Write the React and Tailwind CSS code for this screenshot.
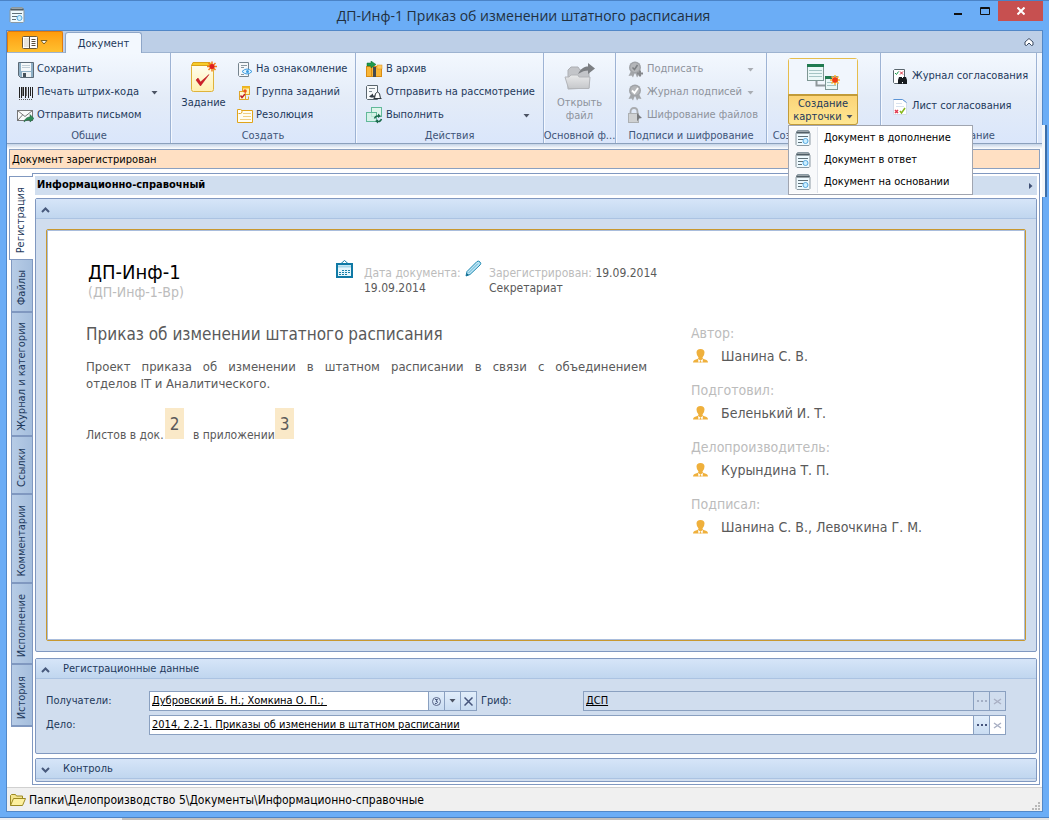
import React from "react";

/* ---------- icons ---------- */

const CardIcon = () => (
  <svg width="16" height="16" viewBox="0 0 16 16" className="shrink-0">
    <path d="M2.5 0.5h11l1.5 3v11l-1 1H2l-1-1v-11z" fill="#e8ecee" stroke="#8b9aa3" />
    <path d="M1.5 2.5h13" stroke="#4f5e66" strokeWidth="2" />
    <rect x="2" y="4" width="12" height="11" fill="#eefaff" />
    <path d="M3 6.500h10M3 9.500h5M3 12.500h4" stroke="#5f7078" />
    <circle cx="10.500" cy="11" r="2.500" fill="#cdefff" stroke="#55a8e0" />
  </svg>
);

const SaveIcon = () => (
  <svg width="16" height="16" viewBox="0 0 16 16">
    <path d="M0.500 0.500h15v15h-13l-2-2z" fill="#8fb0c6" stroke="#5c6a76" />
    <rect x="3" y="1" width="10" height="8" fill="#f5f8fa" />
    <path d="M4 3.500h8M4 5.500h8" stroke="#c0cdd6" />
    <rect x="4" y="10" width="9" height="5" fill="#eef2f4" />
    <rect x="5" y="11" width="3" height="4" fill="#46525c" />
  </svg>
);

const BarcodeIcon = () => (
  <svg width="16" height="16" viewBox="0 0 16 16" shapeRendering="crispEdges">
    <path d="M1.500 2v11M3.500 2v11M7.500 2v11M10.500 2v11M14.500 2v11" stroke="#222" />
    <path d="M5.500 2v9M12.500 2v9" stroke="#222" />
    <path d="M8.500 2v9M4.500 2v9" stroke="#777" />
    <path d="M1 14.500h14" stroke="#555" strokeDasharray="1 1" />
  </svg>
);

const MailIcon = () => (
  <svg width="17" height="16" viewBox="0 0 17 16">
    <rect x="0.500" y="2.500" width="15" height="10" fill="#fafafa" stroke="#777" />
    <path d="M0.500 2.500l7.500 6 7.500-6M0.500 12.500l5-5.500" fill="none" stroke="#777" />
    <path d="M7 14c1-4 4-5 6-5V6.500l4 4-4 3.500v-2c-2 0-4 0-6 2z" fill="#2f8a57" stroke="#1d5f3a" strokeWidth="0.500" />
  </svg>
);

const TaskIcon = () => (
  <svg width="28" height="32" viewBox="0 0 28 32">
    <defs>
      <linearGradient id="task" x1="0" y1="0" x2="0" y2="1">
        <stop offset="0" stopColor="#fffef0" />
        <stop offset="1" stopColor="#fff0b0" />
      </linearGradient>
    </defs>
    <rect x="1.500" y="3.500" width="22" height="27" rx="2" fill="url(#task)" stroke="#dfb33a" />
    <path d="M3 1.500h17l3 3H1.500z" fill="#f7cc28" stroke="#d9a21a" />
    <path d="M6 19l4.500 6L19 13.500l-8.500 7.500-2.500-4z" fill="#d0202a" stroke="#b01018" strokeWidth="0.500" />
    <path d="M22 0.500v10M17 5.500h10M18.500 2l7 7M25.500 2l-7 7" stroke="#f47a1a" strokeWidth="1.500" />
    <circle cx="22" cy="5.500" r="2.500" fill="#e01f1f" />
  </svg>
);

const ReviewIcon = () => (
  <svg width="16" height="16" viewBox="0 0 16 16">
    <path d="M2.500 0.500h9v14h-9l-1-1v-12z" fill="#f6f8fa" stroke="#76848e" />
    <path d="M4 3.500h6M4 5.500h3M4 12.500h3" stroke="#8b98a1" />
    <path d="M5 9.500q5-5 10 0q-5 5-10 0z" fill="#e2f4ff" stroke="#3d9be0" />
    <circle cx="10.500" cy="9.500" r="1.500" fill="#3d9be0" />
  </svg>
);

const TaskGroupIcon = () => (
  <svg width="16" height="16" viewBox="0 0 16 16">
    <rect x="5.500" y="1.500" width="7" height="8" fill="#fff3b4" stroke="#dfa52a" />
    <path d="M5 2.500h8" stroke="#f2bb20" strokeWidth="2" />
    <rect x="2.500" y="6.500" width="6" height="8" fill="#fff7cf" stroke="#dfa52a" />
    <path d="M3.500 10.500l1.500 2 3-3.500" fill="none" stroke="#c01f2a" strokeWidth="1.500" />
    <circle cx="8" cy="6" r="1.800" fill="#f0561a" />
    <path d="M9 14.500h2.500v-3" fill="none" stroke="#dfa52a" />
  </svg>
);

const ResolutionIcon = () => (
  <svg width="17" height="16" viewBox="0 0 17 16">
    <path d="M5.500 2.500h11v12h-15v-8" fill="#fffdf2" stroke="#e0a41c" />
    <path d="M7 5.500h8M7 8.500h8M4 11.500h11" stroke="#f0cf84" />
    <path d="M1.500 8.500v-7h3q1.500 0 1.500 2t-1.500 2h-2" fill="#fff" stroke="#e0a41c" />
  </svg>
);

const ArchiveIcon = () => (
  <svg width="17" height="17" viewBox="0 0 17 17">
    <rect x="0.500" y="5.500" width="15" height="10" fill="#f9b637" stroke="#d98c14" />
    <path d="M5.500 5.500v10" stroke="#d98c14" />
    <rect x="7" y="6" width="3" height="10" fill="#444a50" />
    <rect x="11" y="4" width="5" height="4" fill="#ffc95c" stroke="#d98c14" strokeWidth="0.500" />
    <path d="M1 2h4V0l5 3.500L5 7V5H1z" fill="#1e9a4c" stroke="#0e6a30" strokeWidth="0.500" />
  </svg>
);

const SendIcon = () => (
  <svg width="17" height="16" viewBox="0 0 17 16">
    <path d="M1.500 0.500h10v14h-10l-1-1v-12z" fill="#f8fafb" stroke="#59656d" />
    <path d="M3 3.500h6M3 6.500h3" stroke="#7d8a92" />
    <path d="M3 11.500l4-3v2h3v2h-5z" fill="#353d44" />
    <path d="M8.500 13.500l1-5q2-3 4 0l1 5z" fill="#fff" stroke="#30383e" />
    <path d="M7.500 13.500h8" stroke="#30383e" />
  </svg>
);

const RunIcon = () => (
  <svg width="17" height="17" viewBox="0 0 17 17">
    <rect x="5.500" y="0.500" width="10" height="9" fill="#dff5ec" stroke="#62b999" />
    <rect x="0.500" y="5.500" width="10" height="9" fill="#d2f2e5" fillOpacity="0.800" stroke="#62b999" />
    <path d="M8.500 11.500q1-3 4-2.500M15.500 12q-1 3-4 2.500" fill="none" stroke="#1b6b4c" strokeWidth="1.500" />
    <path d="M12 6.500l3 2.500-3 2zM12 16.500l-3-2.500 3-1.500z" fill="#1b6b4c" />
  </svg>
);

const OpenFileIcon = () => (
  <svg width="34" height="30" viewBox="0 0 34 30">
    <defs>
      <linearGradient id="folder" x1="0" y1="0" x2="0" y2="1">
        <stop offset="0" stopColor="#e8e9ea" />
        <stop offset="1" stopColor="#c6c8cb" />
      </linearGradient>
    </defs>
    <path d="M5 27V8l3-3h7l2 3h9v18z" fill="#c3c5c9" stroke="#adafb3" />
    <path d="M5.500 26.500L2 15h4l2-2h7l1 2h11l-1 11.500z" fill="url(#folder)" stroke="#b3b5b9" />
    <path d="M15 12c3-6 7-7.500 10-7.500V1l7 5.500-7 5.500V8.500c-3 0-6 1-10 3.500z" fill="#7c7f83" />
  </svg>
);

const SealIcon = ({ mark }) => (
  <svg width="17" height="17" viewBox="0 0 17 17">
    <path d="M4 10L1.500 15l3-0.500L6 16.500l2-5 2 5 1.500-2 3 0.500-2.500-5z" fill="#a3a6aa" />
    <circle cx="8" cy="6.500" r="6" fill="#a0a3a7" />
    <circle cx="8" cy="6.500" r="4.500" fill="#b4b6b9" />
    {mark === "check" ? (
      <path d="M5 6.500l2.500 2.500 3.500-5" fill="none" stroke="#fff" strokeWidth="1.800" />
    ) : (
      <g>
        <path d="M5.500 6.500l2 2 3-4.500" fill="none" stroke="#7c7f83" strokeWidth="1.500" />
        <path d="M13 9.500v6M10 12.500h6" stroke="#85888c" strokeWidth="2" />
      </g>
    )}
  </svg>
);

const LockIcon = () => (
  <svg width="17" height="17" viewBox="0 0 17 17">
    <path d="M3.500 7V5q0-4 3.500-4t3.500 4v2" fill="none" stroke="#a9acb0" strokeWidth="1.800" />
    <rect x="1.500" y="6.500" width="10" height="9" fill="#cfd1d3" stroke="#adb0b3" />
    <path d="M10 6l5 5-3 0.500-2 3z" fill="#77797d" />
  </svg>
);

const CreateCardIcon = () => (
  <svg width="34" height="28" viewBox="0 0 34 28">
    <path d="M10.500 17v5.500h9" fill="none" stroke="#8f979b" strokeWidth="2" />
    <rect x="1.500" y="1.500" width="16" height="16" fill="#eaf7f7" stroke="#7d9693" />
    <rect x="1" y="1" width="17" height="3" fill="#1f7a50" />
    <path d="M3 7.500h13M3 10.500h13M3 13.500h13" stroke="#a4c4c4" />
    <rect x="19.500" y="13.500" width="12" height="13" fill="#eaf7f7" stroke="#7d9693" />
    <rect x="19" y="13" width="7" height="3" fill="#1f7a50" />
    <path d="M21 19.500h9M21 22.500h9" stroke="#a4c4c4" />
    <path d="M29 12v10M24 17h10M25.500 13.500l7 7M32.500 13.500l-7 7" stroke="#ffb22a" strokeWidth="1.500" />
    <circle cx="29" cy="17" r="2.800" fill="#f03a18" />
  </svg>
);

const JournalIcon = () => (
  <svg width="15" height="16" viewBox="0 0 15 16">
    <path d="M1.500 0.500h10v14h-10l-1-1v-12z" fill="#fff" stroke="#59656d" />
    <path d="M2 4l1.500 1.500 2-3" fill="none" stroke="#1e9a4c" />
    <path d="M7 2.500l3 3M10 2.500l-3 3" stroke="#d8263a" />
    <path d="M6 8h3v1h1V8h3l1 3v4H10v-2H9v2H5v-4z" fill="#181c20" />
  </svg>
);

const SheetIcon = () => (
  <svg width="15" height="16" viewBox="0 0 15 16">
    <path d="M0.500 0.500h9l4 3v12h-13z" fill="#fff" stroke="#d3dcea" />
    <path d="M0.500 0.500h9l4 3" fill="none" stroke="#5b94d6" />
    <path d="M3 4.500h6M3 7.500h8" stroke="#d8e2ee" />
    <path d="M2 11l3 3M5 11l-3 3" stroke="#e03a50" strokeWidth="1.500" />
    <path d="M7 12l1.500 2L12 9" fill="none" stroke="#86b81c" strokeWidth="1.500" />
  </svg>
);

const CalendarIcon = () => (
  <svg width="17" height="18" viewBox="0 0 17 18" className="shrink-0">
    <path d="M4.500 4l4-3.500 4 3.500" fill="none" stroke="#1781ab" />
    <rect x="1" y="4" width="15" height="13" fill="#e6f6fc" stroke="#0f79a5" strokeWidth="2" />
    <path d="M2 6.500h13" stroke="#a8d8ea" strokeWidth="2" />
    <path d="M6 10.500h8M3 12.500h11M3 14.500h8" stroke="#1781ab" strokeDasharray="2 1" />
  </svg>
);

const PenIcon = () => (
  <svg width="17" height="17" viewBox="0 0 17 17">
    <path d="M1 16l1-4.500L12 1.500q1.500-1 3 0.500t0 3L5 14.500z" fill="#bfe6f5" stroke="#1a86b0" />
    <path d="M3.500 13L13 3.500" stroke="#5fb2d2" />
    <path d="M1 16l0.700-3 2.300 2z" fill="#14688a" />
  </svg>
);

const PersonIcon = () => (
  <svg width="16" height="14" viewBox="0 0 16 14" className="shrink-0">
    <path
      d="M7.500 0q4 0 4 3.500 0 3-2 5 0 1 1.200 1.500l2.800 1q1.500 0.800 1.500 2.500H0q0-1.700 1.500-2.500l2.800-1q1.200-0.500 1.200-1.500-2-2-2-5 0-3.500 4-3.500z"
      fill="#efb03c"
    />
    <path d="M5 10l2.500 1.500L10 10l-0.500 3.500h-4z" fill="#fff" />
    <path d="M7 11.500h1l0.500 2h-2z" fill="#efb03c" />
  </svg>
);

const FolderIcon = () => (
  <svg width="17" height="14" viewBox="0 0 17 14">
    <path d="M1.500 12.500v-10l1-1h4l1 1.500h6v3" fill="#f4e58f" stroke="#9c8a24" />
    <path d="M1.500 12.500l3-7h12l-3 7z" fill="#fdf0a0" stroke="#9c8a24" />
  </svg>
);

const Caret = ({ muted }) => (
  <svg width="7" height="4" viewBox="0 0 7 4" className="shrink-0">
    <path d="M0.500 0h6l-3 3.500z" fill={muted ? "#a9adb3" : "#4b5363"} />
  </svg>
);

const Chevron = ({ down }) => (
  <svg width="9" height="6" viewBox="0 0 9 6">
    <path d={down ? "M1 1l3.500 3.500L8 1" : "M1 5l3.500-3.500L8 5"} fill="none" stroke="#47597c" strokeWidth="2" />
  </svg>
);

const Cross = ({ muted }) => (
  <svg width="9" height="9" viewBox="0 0 9 9">
    <path
      d={muted ? "M1 2l7 5M8 2l-7 5" : "M0.500 0.500l8 8M8.500 0.500l-8 8"}
      stroke={muted ? "#a9b0c4" : "#46557c"}
      strokeWidth="1.500"
    />
  </svg>
);

const Dots = ({ muted }) => (
  <svg width="10" height="2" viewBox="0 0 10 2">
    <path d="M0 1h10" stroke={muted ? "#a3aec4" : "#46557c"} strokeWidth="2" strokeDasharray="2 2" />
  </svg>
);

/* ---------- ribbon ---------- */

const Group = ({ title, width, children }) => (
  <section
    className={
      "relative flex h-[90px] shrink-0 flex-col border-r border-[#9db3d4] pt-[5px] shadow-[1px_0_0_#f4f8ff] " + width
    }
  >
    <div className="flex h-[69px] w-full shrink-0">{children}</div>
    <h2 className="flex justify-center pt-px text-[11px] leading-4 whitespace-nowrap text-[#3e5478]">{title}</h2>
  </section>
);

const Item = ({ icon, label, caret, muted }) => (
  <button
    type="button"
    disabled={muted}
    className={
      "flex h-[23px] w-full items-center gap-[3px] text-left text-[11px] whitespace-nowrap " +
      (muted ? "text-[#8e939c]" : "text-[#1e395b]")
    }
  >
    <span className="flex w-[17px] shrink-0 justify-center">{icon}</span>
    <span className="flex-1">{label}</span>
    {caret && <Caret muted={muted} />}
  </button>
);

const menu = ["Документ в дополнение", "Документ в ответ", "Документ на основании"];

const Ribbon = () => (
  <div className="flex border-b border-[#8ba0bc] bg-linear-to-b from-[#f3f8fe] via-[#e4ecf8] to-[#dae6fb] pl-px">
    <Group title="Общие" width="w-[163px]">
      <div className="w-full pr-3 pl-[9px]">
        <Item icon={<SaveIcon />} label="Сохранить" />
        <Item icon={<BarcodeIcon />} label="Печать штрих-кода" caret />
        <Item icon={<MailIcon />} label="Отправить письмом" />
      </div>
    </Group>
    <Group title="Создать" width="w-[185px]">
      <button type="button" className="flex w-[65px] shrink-0 flex-col items-center pt-[3px] text-[11px] text-[#1e395b]">
        <TaskIcon />
        <span className="leading-5">Задание</span>
      </button>
      <div className="min-w-0 flex-1">
        <Item icon={<ReviewIcon />} label="На ознакомление" />
        <Item icon={<TaskGroupIcon />} label="Группа заданий" />
        <Item icon={<ResolutionIcon />} label="Резолюция" />
      </div>
    </Group>
    <Group title="Действия" width="w-[188px]">
      <div className="w-full pr-[13px] pl-[10px]">
        <Item icon={<ArchiveIcon />} label="В архив" />
        <Item icon={<SendIcon />} label="Отправить на рассмотрение" />
        <Item icon={<RunIcon />} label="Выполнить" caret />
      </div>
    </Group>
    <Group title="Основной ф..." width="w-[72px]">
      <button type="button" disabled className="flex w-full flex-col items-center pt-1 text-[11px] text-[#8e939c]">
        <OpenFileIcon />
        <span className="pt-1 leading-[13px]">
          Открыть
          <br />
          файл
        </span>
      </button>
    </Group>
    <Group title="Подписи и шифрование" width="w-[151px]">
      <div className="w-full pr-3 pl-[11px]">
        <Item icon={<SealIcon />} label="Подписать" caret muted />
        <Item icon={<SealIcon mark="check" />} label="Журнал подписей" caret muted />
        <Item icon={<LockIcon />} label="Шифрование файлов" muted />
      </div>
    </Group>
    <Group title="Создание карточки" width="w-[114px]">
      <button
        type="button"
        className="ml-[21px] flex h-[67px] w-[70px] flex-col rounded-[3px] border border-[#e6bd4c] text-[11px] leading-[13px] text-[#1e395b]"
      >
        <span className="flex h-9 w-full items-center justify-center bg-[#f1f6fd]">
          <CreateCardIcon />
        </span>
        <span className="w-full flex-1 rounded-b-[2px] border-t border-[#c29b39] bg-linear-to-b from-[#fbd478] to-[#ffe793] pt-px text-center outline-1 outline-[#c29b39]">
          Создание
          <br />
          <span className="inline-flex items-center gap-1">
            карточки <Caret />
          </span>
        </span>
      </button>
      <ul className="absolute top-[72px] left-[21px] z-10 w-[185px] border border-[#a0a5b0] bg-white py-px">
        {menu.map((m) => (
          <li key={m}>
            <button
              type="button"
              className="flex h-[22px] w-full items-center text-left text-[11px] whitespace-nowrap text-black"
            >
              <span className="flex h-full w-[29px] items-center border-r border-[#dfe3ea] bg-[#f8f9fb] pl-[6px]">
                <CardIcon />
              </span>
              <span className="pt-px pl-[6px]">{m}</span>
            </button>
          </li>
        ))}
      </ul>
    </Group>
    <Group title="Согласование" width="w-[156px]">
      <div className="flex w-full flex-col gap-[7px] pt-[7px] pl-[11px]">
        <Item icon={<JournalIcon />} label="Журнал согласования" />
        <Item icon={<SheetIcon />} label="Лист согласования" />
      </div>
    </Group>
  </div>
);

/* ---------- content ---------- */

const tabs = [
  ["Файлы", "h-[53px]"],
  ["Журнал и категории", "h-[124px]"],
  ["Ссылки", "h-[58px]"],
  ["Комментарии", "h-[89px]"],
  ["Исполнение", "h-[81px]"],
  ["История", "h-[62px]"],
];

const SideTabs = () => (
  <nav className="flex w-[23px] shrink-0 flex-col items-end pt-[3px]">
    <button
      type="button"
      className="relative z-10 -mr-px flex h-[84px] w-6 items-center justify-center border border-r-0 border-[#8098c0] bg-white pt-[5px] text-[11px] text-[#1e395b]"
    >
      <span className="rotate-180 [writing-mode:vertical-rl]">Регистрация</span>
    </button>
    {tabs.map(([label, h]) => (
      <button
        key={label}
        type="button"
        className={
          "flex w-[21px] items-center justify-center border-b-2 border-l border-[#8098c0] bg-linear-to-r from-[#b7cce6] to-[#a5bedd] pt-[5px] text-[11px] text-[#1e395b] " +
          h
        }
      >
        <span className="rotate-180 [writing-mode:vertical-rl]">{label}</span>
      </button>
    ))}
  </nav>
);

const PanelHeader = ({ title, down }) => (
  <h3 className="h-5 border-b border-[#abc3e2] bg-linear-to-b from-[#d6e5f8] to-[#c0d6ef] text-[11px] text-[#1e395b]">
    <button
      type="button"
      aria-label={title || "Карточка"}
      className="flex h-full w-full items-center gap-[13px] pt-[2px] pl-[5px]"
    >
      <Chevron down={down} />
      {title}
    </button>
  </h3>
);

const people = [
  ["Автор:", "Шанина С. В."],
  ["Подготовил:", "Беленький И. Т."],
  ["Делопроизводитель:", "Курындина Т. П."],
  ["Подписал:", "Шанина С. В., Левочкина Г. М."],
];

const Document = () => (
  <div className="flex flex-1 rounded-[2px] border border-[#c8982f] bg-white">
    <article className="flex-1 border border-[#a9bddc] pt-[29px] pl-[38px] text-[#5a5a5a]">
      <header className="flex h-[62px] items-start text-[12px] leading-[15px]">
        <div className="w-[250px] pl-[2px]">
          <h1 className="text-[20px] leading-6 text-black">ДП-Инф-1</h1>
          <p className="text-[14px] leading-[17px] text-[#bcbcbc]">(ДП-Инф-1-Вр)</p>
        </div>
        <CalendarIcon />
        <p className="w-[100px] pt-[6px] pl-[11px] whitespace-nowrap">
          <span className="text-[#bcbcbc]">Дата документа:</span>
          <br />
          19.09.2014
        </p>
        <span className="ml-3">
          <PenIcon />
        </span>
        <p className="pt-[6px] pl-[7px] whitespace-nowrap">
          <span className="text-[#bcbcbc]">Зарегистрирован:</span> 19.09.2014
          <br />
          Секретариат
        </p>
      </header>
      <div className="flex">
        <div className="w-[561px] shrink-0">
          <h2 className="text-[17px] leading-6 whitespace-nowrap">Приказ об изменении штатного расписания</h2>
          <p className="mt-3 text-justify text-[13px] leading-[17px]">
            Проект приказа об изменении в штатном расписании в связи с объединением{" "}
            <span className="whitespace-nowrap">отделов IT и Аналитического.</span>
          </p>
          <p className="mt-4 flex items-end text-[12px] leading-[14px]">
            <span className="w-[79px] translate-y-[3px]">Листов в док.</span>
            <span className="flex h-[31px] w-[19px] items-center justify-center bg-[#fae9c8] text-[17px]">2</span>
            <span className="w-[91px] translate-y-[3px] pl-[9px] whitespace-nowrap">в приложении</span>
            <span className="flex h-[31px] w-[19px] items-center justify-center bg-[#fae9c8] text-[17px]">3</span>
          </p>
        </div>
        <dl className="ml-[44px] flex-1 text-[14px]">
          {people.map(([role, name]) => (
            <div key={role} className="mb-[11px]">
              <dt className="leading-[22px] text-[#bcbcbc]">{role}</dt>
              <dd className="flex items-center gap-3 pl-[2px] leading-6">
                <PersonIcon />
                {name}
              </dd>
            </div>
          ))}
        </dl>
      </div>
    </article>
  </div>
);

const field = "min-w-0 flex-1 px-[2px] pt-px text-[11px] text-black underline outline-none";
const fieldBox = "flex h-5 border border-[#8aa0c0]";
const sideButton =
  "flex w-4 shrink-0 items-center justify-center border-l border-[#8aa0c0] bg-linear-to-b from-[#e2eefb] to-[#c9dcf2]";
const mutedButton = "flex w-4 shrink-0 items-center justify-center border-l border-[#8aa0c0]";

const Registration = () => (
  <section className="rounded-[2px] border border-[#8098c0] bg-[#d0ddee]">
    <PanelHeader title="Регистрационные данные" />
    <form className="flex flex-col gap-1 pt-3 pr-[30px] pb-[18px] pl-[10px] text-[11px] text-[#1e395b]">
      <div className="flex items-center">
        <label htmlFor="to" className="w-[103px] shrink-0">
          Получатели:
        </label>
        <div className={fieldBox + " w-[328px] shrink-0 bg-white"}>
          <input id="to" className={field} defaultValue="Дубровский Б. Н.; Хомкина О. П.; " />
          <button type="button" aria-label="Выбрать" className={sideButton}>
            <svg width="9" height="9" viewBox="0 0 9 9">
              <circle cx="4.500" cy="4.500" r="4" fill="none" stroke="#5a688a" />
              <path d="M3 2.500h2.500l-1.500 1.800q1.800 0 1.500 1.200t-2.500 1" fill="none" stroke="#46557c" />
            </svg>
          </button>
          <button type="button" aria-label="Список" className={sideButton}>
            <Caret />
          </button>
          <button type="button" aria-label="Очистить" className={sideButton}>
            <Cross />
          </button>
        </div>
        <label htmlFor="mark" className="w-[106px] shrink-0 pl-1">
          Гриф:
        </label>
        <div className={fieldBox + " flex-1"}>
          <input id="mark" className={field} defaultValue="ДСП" readOnly />
          <button type="button" aria-label="Выбрать гриф" disabled className={mutedButton}>
            <Dots muted />
          </button>
          <button type="button" aria-label="Очистить гриф" disabled className={mutedButton}>
            <Cross muted />
          </button>
        </div>
      </div>
      <div className="flex items-center">
        <label htmlFor="case" className="w-[103px] shrink-0">
          Дело:
        </label>
        <div className={fieldBox + " flex-1 bg-white"}>
          <input id="case" className={field} defaultValue="2014, 2.2-1. Приказы об изменении в штатном расписании" />
          <button type="button" aria-label="Выбрать дело" className={sideButton}>
            <Dots />
          </button>
          <button type="button" aria-label="Очистить дело" disabled className={mutedButton}>
            <Cross muted />
          </button>
        </div>
      </div>
    </form>
  </section>
);

export default function App() {
  return (
    <div className="flex min-h-screen flex-col bg-[#c3c0bd] font-['DejaVu_Sans_Condensed','DejaVu_Sans',sans-serif]">
      <div className="flex flex-1 flex-col border-y border-[#4b83c6] bg-[#6badf6] pb-[5px]">
        <header className="flex h-[29px] items-start">
          <span className="mt-[6px] ml-[9px] w-[94px]">
            <CardIcon />
          </span>
          <h1 className="flex-1 pt-1 text-center font-['Open_Sans',sans-serif] text-[14px] leading-[22px] text-[#22303e]">
            ДП-Инф-1 Приказ об изменении штатного расписания
          </h1>
          <div className="mr-[6px] flex h-5">
            <button type="button" aria-label="Свернуть" className="flex w-7 justify-center pt-3">
              <svg width="8" height="2">
                <path d="M0 1h8" stroke="#111" strokeWidth="2" />
              </svg>
            </button>
            <button type="button" aria-label="Развернуть" className="flex w-[26px] justify-center pt-[6px]">
              <svg width="10" height="8">
                <path d="M0.500 0.500h9v7h-9zM0 1.500h10" fill="none" stroke="#111" />
              </svg>
            </button>
            <button type="button" aria-label="Закрыть" className="flex w-[45px] items-center justify-center bg-[#c75050]">
              <svg width="8" height="8">
                <path d="M0.500 0.500l7 7M7.500 0.500l-7 7" stroke="#fff" strokeWidth="2" />
              </svg>
            </button>
          </div>
        </header>

        <div className="relative mx-[6px] flex flex-1 flex-col border border-[#5288c8] bg-white">
          <div className="flex h-[22px] items-end border-b border-[#9db3d0] bg-[#bdcfe7]">
            <button
              type="button"
              aria-label="Меню"
              className="flex h-[21px] w-[56px] items-center justify-center gap-[2px] rounded-t-[2px] border border-b-0 border-[#e27a0c] bg-linear-to-b from-[#ff9c0a] to-[#ffc02e]"
            >
              <svg width="16" height="13" viewBox="0 0 16 13">
                <rect x="0.500" y="0.500" width="15" height="12" rx="1" fill="#fff" stroke="#6b5a3a" />
                <rect x="2" y="2" width="5" height="9" fill="#e9e5dc" />
                <path d="M7.500 1v11M9.500 3.500h4M9.500 5.500h4M9.500 7.500h4M9.500 9.500h4" stroke="#5a5040" />
              </svg>
              <svg width="8" height="5" viewBox="0 0 8 5">
                <path d="M1 0.500h6L4 4z" fill="#fff" stroke="#7a6020" />
              </svg>
            </button>
            <button
              type="button"
              className="-mb-px ml-[2px] h-[21px] w-[77px] rounded-t-[3px] border border-b-0 border-[#8ea6c8] bg-[#f3f8fe] pt-[2px] text-[11px] text-[#1e395b]"
            >
              Документ
            </button>
            <button type="button" aria-label="Свернуть ленту" className="mr-2 mb-[6px] ml-auto">
              <svg width="10" height="8" viewBox="0 0 10 8">
                <path d="M1 4l4-3.500L9 4v3L7.500 7.500 5 5 2.500 7.500 1 7z" fill="#fff" stroke="#3b4a63" />
              </svg>
            </button>
          </div>
          <Ribbon />
          <div className="h-[5px] bg-linear-to-b from-[#c5d3e6] to-white" />
          <p className="mx-[2px] h-5 border border-[#8ba0c0] bg-[#ffe0c3] px-[2px] text-[11px] leading-5 text-black">
            Документ зарегистрирован
          </p>

          <div className="mt-1 flex flex-1 pr-[2px] pl-[2px]">
            <SideTabs />
            <main className="flex min-w-0 flex-1 flex-col border border-[#8098c0] bg-white p-[2px]">
              <div className="flex h-[19px] items-center justify-between bg-[#d0deef] pr-1 pl-[2px] text-[11px] font-bold text-black">
                Информационно-справочный
                <svg width="4" height="6" viewBox="0 0 4 6">
                  <path d="M0 0l3.500 3L0 6z" fill="#3e4f74" />
                </svg>
              </div>
              <section className="mt-[3px] flex flex-1 flex-col rounded-[2px] border border-[#8098c0] bg-[#d0ddee]">
                <PanelHeader />
                <div className="flex flex-1 p-[10px]">
                  <Document />
                </div>
              </section>
              <div className="mt-[6px]">
                <Registration />
              </div>
              <section className="mt-1 rounded-[2px] border border-[#8098c0] bg-[#d0ddee] pb-[2px]">
                <PanelHeader title="Контроль" down />
              </section>
            </main>
          </div>

          <footer className="mt-[2px] flex h-6 items-center gap-[3px] border-t border-[#d0d0d0] bg-[#f0f0f0] pr-[2px] pl-[2px] text-[12px] text-black">
            <FolderIcon />
            <span className="flex-1">Папки\Делопроизводство 5\Документы\Информационно-справочные</span>
            <svg width="8" height="8" viewBox="0 0 8 8" className="mt-3">
              <path d="M6 0h2v2H6zM3 3h2v2H3zM6 3h2v2H6zM0 6h2v2H0zM3 6h2v2H3zM6 6h2v2H6z" fill="#b8b8b8" />
            </svg>
          </footer>
          <div className="absolute top-[94px] -right-[5px] h-[72px] w-[5px] border-r-2 border-[#3c6ea8] bg-[#f4f6f8]" />
        </div>
      </div>
      <div className="flex h-[2px]">
        <div className="w-[122px] bg-[#eceef2]" />
        <div className="flex-1" />
        <div className="w-[59px] bg-[#e4e4e4]" />
      </div>
    </div>
  );
}
